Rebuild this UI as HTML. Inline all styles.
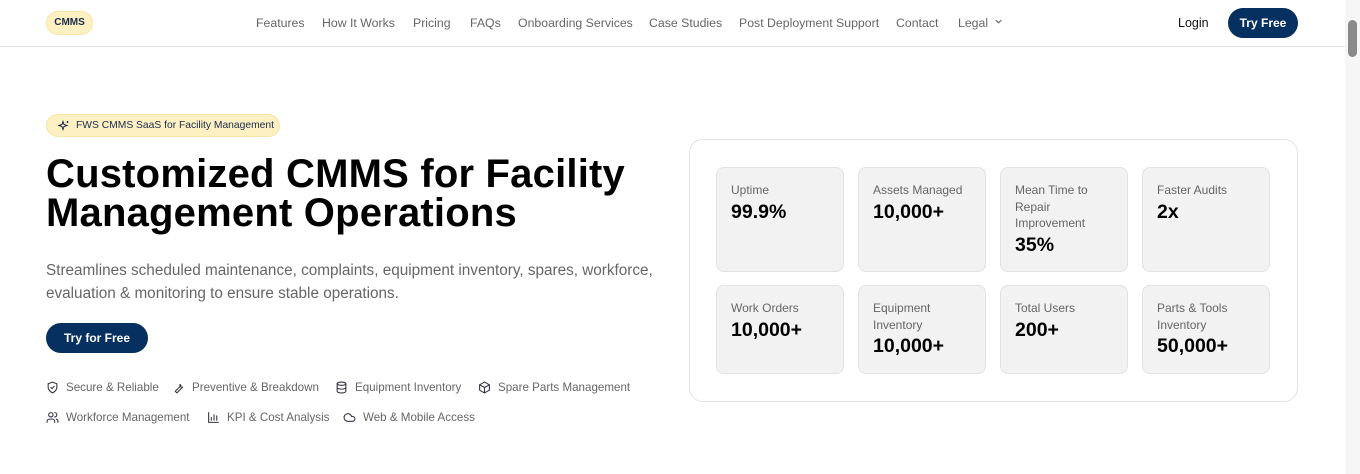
<!DOCTYPE html>
<html><head><meta charset="utf-8"><style>
*{margin:0;padding:0;box-sizing:border-box}
body{width:1360px;height:474px;overflow:hidden;background:#fff;font-family:"Liberation Sans",sans-serif;position:relative;color:#111}
.nav{position:absolute;left:0;top:0;width:1345px;height:47px;border-bottom:1px solid #e5e5e5}
.logo{position:absolute;left:46px;top:11px;width:47px;height:24px;border-radius:12px;background:#fdf1c4;border:1px solid #f7e6a6;font-size:10px;font-weight:bold;color:#1a2a4a;text-align:center;line-height:22px}
.links{position:absolute;top:16px;font-size:12.3px;color:#666}
.links span{position:absolute;white-space:nowrap}
.login{position:absolute;left:1178px;top:16px;font-size:12.5px;color:#111}
.tf{position:absolute;left:1228px;top:8px;width:70px;height:30px;border-radius:15px;background:#05305f;color:#fff;font-size:12px;font-weight:bold;text-align:center;line-height:30px}
.sb{position:absolute;left:1345px;top:0;width:15px;height:474px;background:#f6f6f6}
.sb i{position:absolute;left:3px;top:20px;width:9px;height:37px;border-radius:5px;background:#8a8a8a}
.badge{position:absolute;left:46px;top:114px;width:234px;height:23px;border-radius:12px;background:#fdf1c4;border:1px solid #f7e6a6;font-size:10.3px;color:#1a2a4a;line-height:21px;padding-left:29px;white-space:nowrap}
h1{position:absolute;left:46px;top:155px;font-size:40px;line-height:39px;font-weight:bold;letter-spacing:0.2px;color:#000}
.p{position:absolute;left:46px;top:259px;font-size:15.3px;line-height:23px;color:#666;width:640px}
.btn{position:absolute;left:46px;top:323px;width:102px;height:30px;border-radius:15px;background:#05305f;color:#fff;font-size:12px;font-weight:bold;text-align:center;line-height:30px}
.f{position:absolute;font-size:11.6px;color:#666;white-space:nowrap;display:flex;align-items:center}
.f svg{width:13px;height:13px;margin-right:7px;stroke:#334;fill:none;stroke-width:2;stroke-linecap:round;stroke-linejoin:round}
.card{position:absolute;left:689px;top:139px;width:609px;height:263px;border:1px solid #e3e3e3;border-radius:14px}
.s{position:absolute;width:128px;background:#f2f2f2;border:1px solid #e2e2e2;border-radius:8px;padding:14px 14px}
.s .l{font-size:12px;color:#666;line-height:16.5px}
.s .v{font-size:19.5px;font-weight:bold;color:#000;line-height:26px;margin-top:0}
</style></head><body>
<div class="nav">
<div class="logo">CMMS</div>
<div class="links">
<span style="left:256px">Features</span><span style="left:322px">How It Works</span><span style="left:413px">Pricing</span><span style="left:470px">FAQs</span><span style="left:518px">Onboarding Services</span><span style="left:649px">Case Studies</span><span style="left:739px">Post Deployment Support</span><span style="left:896px">Contact</span><span style="left:958px">Legal <svg width="9" height="9" viewBox="0 0 10 10" style="vertical-align:1px;margin-left:2px"><path d="M2 3.5l3 3 3-3" stroke="#666" fill="none" stroke-width="1.3"/></svg></span>
</div>
<div class="login">Login</div>
<div class="tf">Try Free</div>
</div>
<div class="sb"><i></i></div>
<div class="badge"><svg style="position:absolute;left:11px;top:5px" width="12" height="12" viewBox="0 0 24 24" fill="none" stroke="#1a2a4a" stroke-width="2"><path d="M10 3l2 6 6 2-6 2-2 6-2-6-6-2 6-2z"/><path d="M19 2v4M17 4h4"/></svg>FWS CMMS SaaS for Facility Management</div>
<h1>Customized CMMS for Facility<br>Management Operations</h1>
<div class="p">Streamlines scheduled maintenance, complaints, equipment inventory, spares, workforce, evaluation &amp; monitoring to ensure stable operations.</div>
<div class="btn">Try for Free</div>
<div class="f" style="left:46px;top:381px"><svg viewBox="0 0 24 24"><path d="M12 22s8-4 8-10V5l-8-3-8 3v7c0 6 8 10 8 10z"/><path d="M9 12l2 2 4-4"/></svg>Secure &amp; Reliable</div>
<div class="f" style="left:172px;top:381px"><svg viewBox="0 0 24 24"><path d="M14.7 6.3a4 4 0 005 5L13 18l-4 4-3-3 4-4 6.7-6.7z"/></svg>Preventive &amp; Breakdown</div>
<div class="f" style="left:335px;top:381px"><svg viewBox="0 0 24 24"><ellipse cx="12" cy="5" rx="8" ry="3"/><path d="M4 5v14c0 1.7 3.6 3 8 3s8-1.3 8-3V5M4 12c0 1.7 3.6 3 8 3s8-1.3 8-3"/></svg>Equipment Inventory</div>
<div class="f" style="left:478px;top:381px"><svg viewBox="0 0 24 24"><path d="M12 2l9 5v10l-9 5-9-5V7z"/><path d="M3 7l9 5 9-5M12 12v10"/></svg>Spare Parts Management</div>
<div class="f" style="left:46px;top:411px"><svg viewBox="0 0 24 24"><circle cx="9" cy="7" r="4"/><path d="M2 21v-2a4 4 0 014-4h6a4 4 0 014 4v2M16 3a4 4 0 010 8M22 21v-2a4 4 0 00-3-4"/></svg>Workforce Management</div>
<div class="f" style="left:207px;top:411px"><svg viewBox="0 0 24 24"><path d="M3 3v18h18M8 17v-5M13 17V7M18 17v-8"/></svg>KPI &amp; Cost Analysis</div>
<div class="f" style="left:343px;top:411px"><svg viewBox="0 0 24 24"><path d="M17.5 19H9a7 7 0 116.7-9h1.8a4.5 4.5 0 010 9z"/></svg>Web &amp; Mobile Access</div>
<div class="card"></div>
<div class="s" style="left:716px;top:167px;height:105px"><div class="l">Uptime</div><div class="v">99.9%</div></div>
<div class="s" style="left:858px;top:167px;height:105px"><div class="l">Assets Managed</div><div class="v">10,000+</div></div>
<div class="s" style="left:1000px;top:167px;height:105px"><div class="l">Mean Time to<br>Repair<br>Improvement</div><div class="v">35%</div></div>
<div class="s" style="left:1142px;top:167px;height:105px"><div class="l">Faster Audits</div><div class="v">2x</div></div>
<div class="s" style="left:716px;top:285px;height:89px"><div class="l">Work Orders</div><div class="v">10,000+</div></div>
<div class="s" style="left:858px;top:285px;height:89px"><div class="l">Equipment<br>Inventory</div><div class="v">10,000+</div></div>
<div class="s" style="left:1000px;top:285px;height:89px"><div class="l">Total Users</div><div class="v">200+</div></div>
<div class="s" style="left:1142px;top:285px;height:89px"><div class="l">Parts &amp; Tools<br>Inventory</div><div class="v">50,000+</div></div>
</body></html>
